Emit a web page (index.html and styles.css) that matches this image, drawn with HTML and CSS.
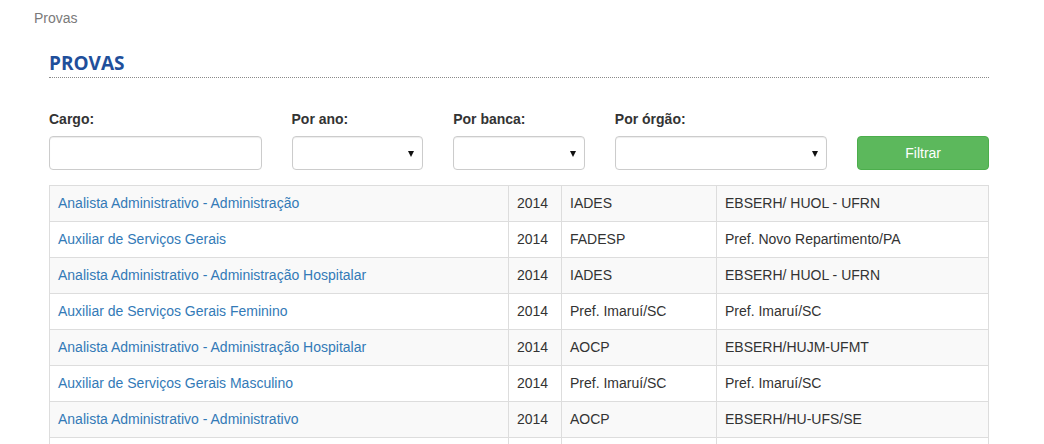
FILE: index.html
```html
<!DOCTYPE html>
<html lang="pt-BR">
<head>
  <meta charset="UTF-8">
  <title>Provas</title>
  <link rel="stylesheet" href="styles.css">
</head>
<body>
  <div class="breadcrumb">Provas</div>
  <div class="container">
    <h2 class="page-title">PROVAS</h2>
    <form class="filters">
      <div class="col col-3">
        <label for="cargo">Cargo:</label>
        <input id="cargo" class="field" type="text">
      </div>
      <div class="col col-2">
        <label for="ano">Por ano:</label>
        <div class="select-wrap"><select id="ano" class="field"><option></option></select></div>
      </div>
      <div class="col col-2">
        <label for="banca">Por banca:</label>
        <div class="select-wrap"><select id="banca" class="field"><option></option></select></div>
      </div>
      <div class="col col-3">
        <label for="orgao">Por órgão:</label>
        <div class="select-wrap"><select id="orgao" class="field"><option></option></select></div>
      </div>
      <div class="col col-2 col-btn">
        <button type="button" class="btn-filter">Filtrar</button>
      </div>
    </form>
    <table class="provas">
      <colgroup>
        <col class="c-cargo"><col class="c-ano"><col class="c-banca"><col class="c-orgao">
      </colgroup>
      <tbody>
        <tr><td><a href="#">Analista Administrativo - Administração</a></td><td>2014</td><td>IADES</td><td>EBSERH/ HUOL - UFRN</td></tr>
        <tr><td><a href="#">Auxiliar de Serviços Gerais</a></td><td>2014</td><td>FADESP</td><td>Pref. Novo Repartimento/PA</td></tr>
        <tr><td><a href="#">Analista Administrativo - Administração Hospitalar</a></td><td>2014</td><td>IADES</td><td>EBSERH/ HUOL - UFRN</td></tr>
        <tr><td><a href="#">Auxiliar de Serviços Gerais Feminino</a></td><td>2014</td><td>Pref. Imaruí/SC</td><td>Pref. Imaruí/SC</td></tr>
        <tr><td><a href="#">Analista Administrativo - Administração Hospitalar</a></td><td>2014</td><td>AOCP</td><td>EBSERH/HUJM-UFMT</td></tr>
        <tr><td><a href="#">Auxiliar de Serviços Gerais Masculino</a></td><td>2014</td><td>Pref. Imaruí/SC</td><td>Pref. Imaruí/SC</td></tr>
        <tr><td><a href="#">Analista Administrativo - Administrativo</a></td><td>2014</td><td>AOCP</td><td>EBSERH/HU-UFS/SE</td></tr>
        <tr><td>&nbsp;</td><td>&nbsp;</td><td>&nbsp;</td><td>&nbsp;</td></tr>
      </tbody>
    </table>
  </div>
</body>
</html>
```

FILE: styles.css
```css
body {
  margin: 0;
  font-family: "Liberation Sans", Arial, sans-serif;
  font-size: 14px;
  color: #333;
  background: #fff;
}
.breadcrumb {
  padding: 9px 0 0 34px;
  color: #7a7a7a;
  line-height: 18px;
}
.container {
  width: 940px;
  margin-left: 49px;
}
.page-title {
  margin: 24px 0 0 0;
  padding-bottom: 1px;
  font-family: "Open Sans", sans-serif;
  font-size: 19px;
  font-weight: 700;
  line-height: 25px;
  color: #1f4f9b;
  border-bottom: 1px dotted #8a8a8a;
}
.filters {
  display: flex;
  margin: 31px -15px 0 -15px;
}
.col {
  box-sizing: border-box;
  padding: 0 15px;
}
.col-3 { width: 25%; }
.col-2 { width: 16.6667%; }
.col-btn {
  display: flex;
  align-items: flex-end;
}
label {
  display: block;
  font-weight: 700;
  line-height: 20px;
  margin-bottom: 7px;
}
.field {
  box-sizing: border-box;
  display: block;
  width: 100%;
  height: 34px;
  padding: 6px 12px;
  font: inherit;
  color: #555;
  background: #fff;
  border: 1px solid #ccc;
  border-radius: 4px;
  box-shadow: inset 0 1px 1px rgba(0,0,0,0.075);
  outline: none;
}
select.field {
  appearance: none;
  -webkit-appearance: none;
}
.select-wrap {
  position: relative;
}
.select-wrap::after {
  content: "";
  position: absolute;
  right: 9px;
  top: 15px;
  border-left: 3px solid transparent;
  border-right: 3px solid transparent;
  border-top: 6px solid #111;
  pointer-events: none;
}
.btn-filter {
  width: 100%;
  height: 34px;
  font: inherit;
  color: #fff;
  background: #5cb85c;
  border: 1px solid #4cae4c;
  border-radius: 4px;
  cursor: pointer;
}
.provas {
  width: 100%;
  margin-top: 15px;
  border-collapse: collapse;
  table-layout: fixed;
  border: 1px solid #ddd;
}
.c-cargo { width: 459px; }
.c-ano { width: 53px; }
.c-banca { width: 155px; }
.provas td {
  padding: 8px;
  line-height: 19px;
  border: 1px solid #ddd;
  white-space: nowrap;
}
.provas tr:nth-child(odd) td {
  background: #f9f9f9;
}
.provas a {
  color: #337ab7;
  text-decoration: none;
}
```
